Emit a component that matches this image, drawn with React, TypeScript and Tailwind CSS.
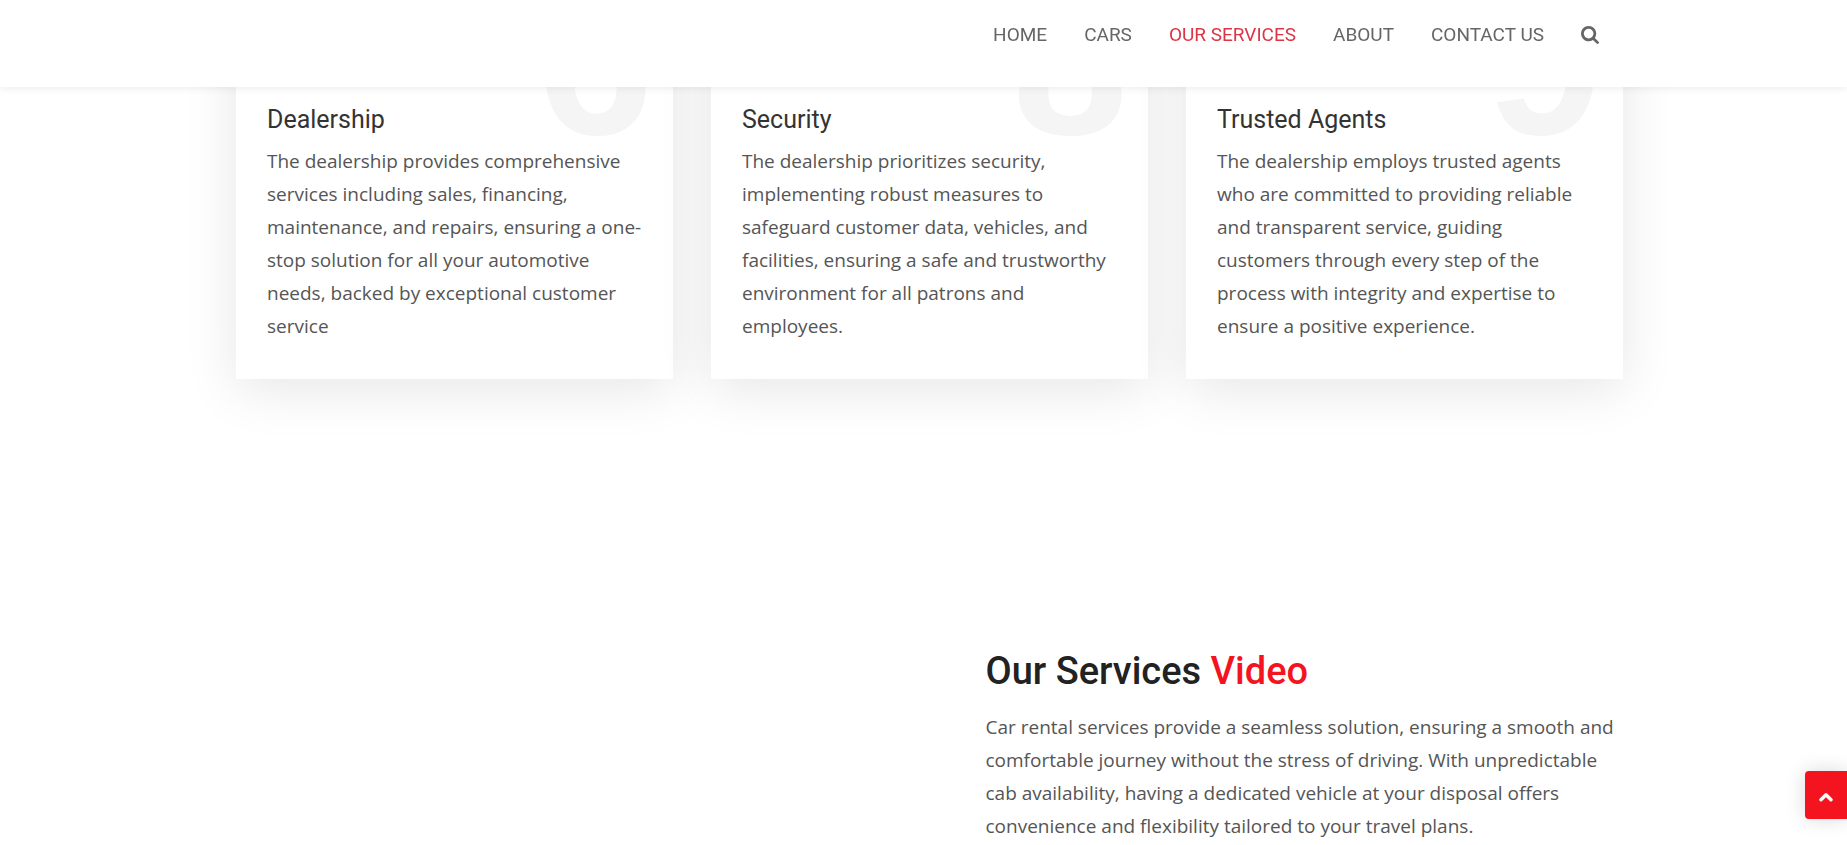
const links = [
  { label: "HOME", href: "#home" },
  { label: "CARS", href: "#cars" },
  { label: "OUR SERVICES", href: "#services", active: true },
  { label: "ABOUT", href: "#about" },
  { label: "CONTACT US", href: "#contact" },
];

const services = [
  {
    digit: "6",
    title: "Dealership",
    text: "The dealership provides comprehensive services including sales, financing, maintenance, and repairs, ensuring a one-stop solution for all your automotive needs, backed by exceptional customer service",
  },
  {
    digit: "8",
    title: "Security",
    text: "The dealership prioritizes security, implementing robust measures to safeguard customer data, vehicles, and facilities, ensuring a safe and trustworthy environment for all patrons and employees.",
  },
  {
    digit: "9",
    title: "Trusted Agents",
    text: "The dealership employs trusted agents who are committed to providing reliable and transparent service, guiding customers through every step of the process with integrity and expertise to ensure a positive experience.",
  },
];

function SearchIcon() {
  return (
    <svg viewBox="0 0 1664 1664" className="size-[18px]" fill="currentColor" aria-hidden="true">
      <path d="M1152 704q0-185-131.5-316.5t-316.5-131.5-316.5 131.5-131.5 316.5 131.5 316.5 316.5 131.5 316.5-131.5 131.5-316.5zm512 832q0 52-38 90t-90 38q-54 0-90-38l-343-342q-179 124-399 124-143 0-273.5-55.5t-225-150-150-225-55.5-273.5 55.5-273.5 150-225 225-150 273.5-55.5 273.5 55.5 225 150 150 225 55.5 273.5q0 220-124 399l343 343q37 37 37 90z" />
    </svg>
  );
}

function ChevronUpIcon() {
  return (
    <svg viewBox="0 0 14 10" className="h-[10px] w-[14px]" aria-hidden="true">
      <path
        d="M2 7.8 7 2.8l5 5"
        fill="none"
        stroke="currentColor"
        strokeWidth="3.4"
        strokeLinecap="round"
        strokeLinejoin="round"
      />
    </svg>
  );
}

function Header() {
  return (
    <header className="fixed inset-x-0 top-0 z-20 h-[87px] bg-white shadow-[0_0_9px_rgba(0,0,0,0.1)]">
      <div className="mx-auto flex max-w-[1399px] justify-end px-6 pt-5">
        <nav className="flex items-center gap-[37px] font-[Roboto,sans-serif] text-[19px] leading-[30px]">
          {links.map((link) => (
            <a
              key={link.label}
              href={link.href}
              className={link.active ? "text-[#dc3545]" : "text-[#666666]"}
            >
              {link.label}
            </a>
          ))}
          <button type="button" aria-label="Search" className="text-[#666666]">
            <SearchIcon />
          </button>
        </nav>
      </div>
    </header>
  );
}

export default function App() {
  return (
    <div className="min-h-screen overflow-hidden bg-white font-['Open_Sans',sans-serif] text-[19px] leading-[33px] text-[#555555]">
      <Header />
      <main className="mx-auto max-w-[1399px] pl-3">
        <section id="services" className="-mt-24 grid grid-cols-3 gap-[38px]">
          {services.map((service) => (
            <article
              key={service.title}
              className="relative bg-white px-[31px] pt-[200px] pb-9 shadow-[0_10px_50px_rgba(0,0,0,0.1)]"
            >
              <span
                aria-hidden="true"
                className="absolute top-[58px] right-5 font-['Liberation_Sans',sans-serif] text-[208px] leading-[200px] font-bold text-[#f5f5f5]"
              >
                {service.digit}
              </span>
              <h2 className="relative mb-[9px] font-[Roboto,sans-serif] text-[25px] leading-8 text-[#333333]">
                {service.title}
              </h2>
              <p className="relative">{service.text}</p>
            </article>
          ))}
        </section>
        <section className="mt-[266px] grid grid-cols-2">
          <div aria-label="Services video" />
          <div className="pl-14">
            <h2 className="mb-3.5 font-[Roboto,sans-serif] text-[38px] leading-[52px] font-medium text-[#222222]">
              Our Services <span className="text-[#f3141f]">Video</span>
            </h2>
            <p>
              Car rental services provide a seamless solution, ensuring a smooth and comfortable
              journey without the stress of driving. With unpredictable cab availability, having a
              dedicated vehicle at your disposal offers convenience and flexibility tailored to
              your travel plans.
            </p>
          </div>
        </section>
      </main>
      <button
        type="button"
        aria-label="Back to top"
        className="fixed right-0 bottom-[26px] z-10 flex h-12 w-[42px] items-center justify-center rounded-l bg-[#f3141f] pt-1 text-white shadow-[0_0_20px_rgba(0,0,0,0.15)]"
      >
        <ChevronUpIcon />
      </button>
    </div>
  );
}
